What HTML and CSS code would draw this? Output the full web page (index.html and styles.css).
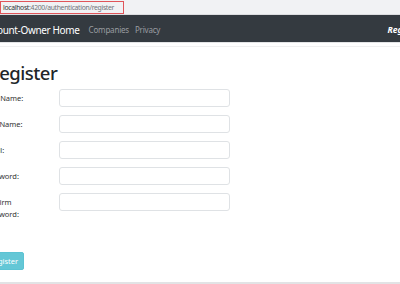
FILE: index.html
```html
<!DOCTYPE html>
<html lang="en">
<head>
  <meta charset="UTF-8">
  <title>Register</title>
  <meta name="viewport" content="width=device-width, initial-scale=1.0">
  <link rel="stylesheet" href="styles.css">
</head>
<body>
  <div class="url-bar">
    <span class="url"><b>localhost</b>:4200/authentication/register</span>
  </div>

  <nav class="navbar">
    <a class="brand" href="#">Account-Owner Home</a>
    <a class="nav-link" href="#">Companies</a>
    <a class="nav-link" href="#">Privacy</a>
    <a class="nav-right" href="#">Register</a>
  </nav>

  <main class="content">
    <h1>Register</h1>
    <form class="register-form">
      <div class="form-row">
        <label>First Name:</label>
        <input type="text">
      </div>
      <div class="form-row">
        <label>Last Name:</label>
        <input type="text">
      </div>
      <div class="form-row">
        <label>Email:</label>
        <input type="text">
      </div>
      <div class="form-row">
        <label>Password:</label>
        <input type="password">
      </div>
      <div class="form-row">
        <label>Confirm Password:</label>
        <input type="password">
      </div>
      <button type="button" class="btn-register">Register</button>
    </form>
  </main>

  <footer class="page-footer"></footer>
</body>
</html>
```

FILE: styles.css
```css
* {
  box-sizing: border-box;
  margin: 0;
  padding: 0;
}

html, body {
  overflow: hidden;
}

body {
  width: 400px;
  height: 284px;
  background-color: #fff;
  font-family: "Noto Sans", "Open Sans", sans-serif;
  color: #212529;
}

.url-bar {
  height: 15px;
  padding-top: 1px;
  background-color: #f1f2f4;
  border-bottom: 1px solid #dcdde0;
}

.url {
  display: block;
  width: 124px;
  height: 13px;
  padding-left: 2px;
  border: 1px solid #e0555a;
  font-size: 6.8px;
  letter-spacing: -0.3px;
  line-height: 11px;
  color: #707378;
  white-space: nowrap;
  overflow: hidden;
}

.url b {
  font-weight: normal;
  color: #303236;
}

.navbar {
  display: flex;
  align-items: center;
  height: 28px;
  padding-top: 2px;
  background-color: #343a40;
  border-bottom: 1px solid #e3e4e6;
  white-space: nowrap;
}

.navbar a {
  text-decoration: none;
}

.brand {
  margin-left: -18px;
  margin-right: 9px;
  font-size: 10px;
  letter-spacing: -0.35px;
  color: #fff;
}

.nav-link {
  margin-right: 6px;
  font-size: 8px;
  letter-spacing: -0.2px;
  color: #9a9da1;
}

.nav-right {
  margin-left: auto;
  margin-right: -21px;
  font-size: 8.5px;
  font-weight: bold;
  font-style: italic;
  color: #fff;
}

.content {
  height: 236px;
  margin-left: -17px;
  margin-top: 3px;
  padding-top: 14px;
  border-top: 1px solid #f0f0f1;
}

h1 {
  margin-left: 5px;
  margin-bottom: 4px;
  font-size: 18.5px;
  font-weight: 500;
  letter-spacing: -0.5px;
  line-height: 24px;
}

.register-form {
  display: flex;
  flex-direction: column;
  gap: 8px;
}

.form-row {
  display: grid;
  grid-template-columns: 76px 171px;
  align-items: start;
}

.form-row label {
  padding-top: 3px;
  padding-right: 18px;
  font-size: 7.5px;
  line-height: 12px;
  color: #333;
}

.form-row input {
  height: 18px;
  border: 1px solid #dfe2e5;
  border-radius: 3px;
  background-color: #fff;
}

.btn-register {
  align-self: flex-start;
  margin-top: 24px;
  height: 18px;
  padding: 0 5px;
  border: 1px solid #5cc3d3;
  border-radius: 2px;
  background-color: #64c7d6;
  color: #fff;
  font-family: inherit;
  font-size: 7.5px;
}

.page-footer {
  border-top: 2px solid #e2e3e5;
}
```
